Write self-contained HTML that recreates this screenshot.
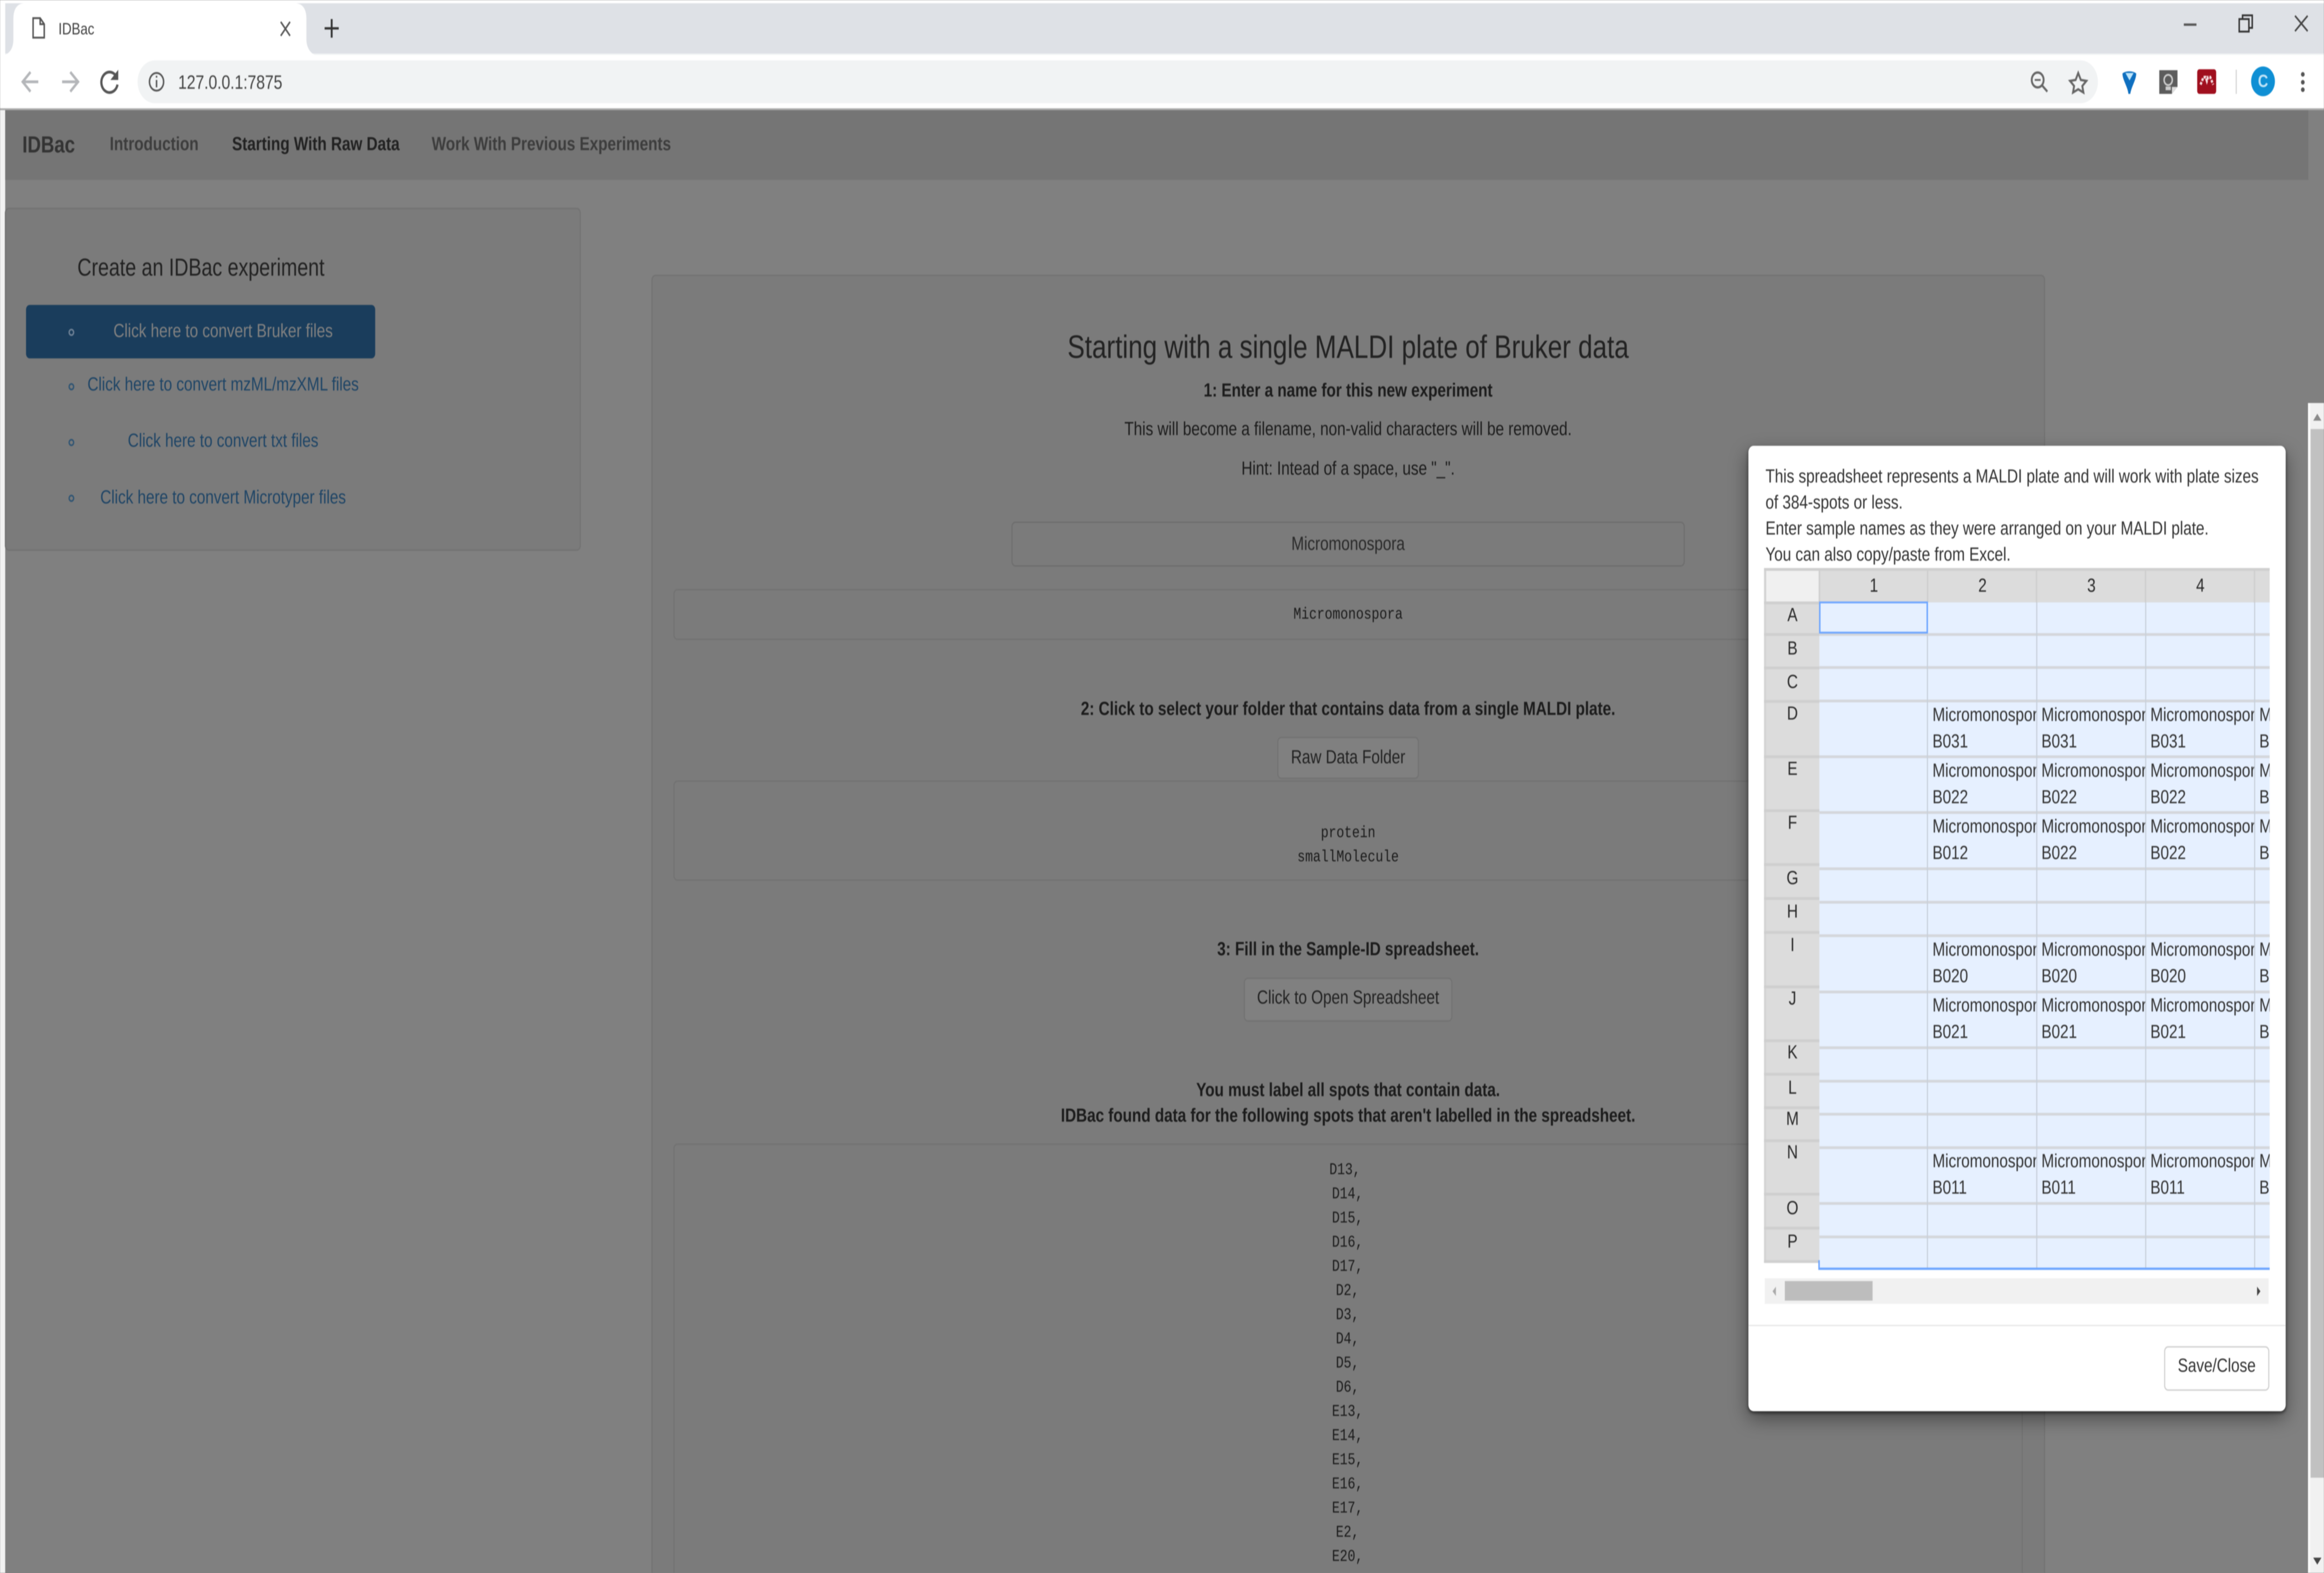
<!DOCTYPE html>
<html><head><meta charset="utf-8"><title>IDBac</title>
<style>
html,body{margin:0;padding:0;width:100%;height:100%;overflow:hidden;background:#808080}
#p{position:absolute;left:0;top:0;width:6250px;height:3384px;overflow:hidden;font-family:"Liberation Sans",sans-serif;font-size:41px;color:#1c1c1c;transform-origin:0 0;filter:blur(1px)}
#p div{position:absolute}
.t{white-space:pre;line-height:56px;height:56px}
.cx{left:1811px;width:3629px;text-align:center}
.l{left:1799px}
.b{font-weight:bold}
.m{font-family:"Liberation Mono",monospace;font-size:35px;line-height:52px;height:52px;color:#1c1c1c}
.n{font-weight:bold;font-size:41px;color:#3d3d3d;line-height:56px;height:56px;top:281px;white-space:pre}
.s{left:70px;width:1060px;text-align:center;color:#1f4566;font-size:41px}
.bx{background:#7b7b7b;border:3px solid #727272;border-radius:11px;box-sizing:border-box}
.h{left:4750px;width:141px;text-align:center;color:#2a2a2a;line-height:56px;height:56px;margin-top:-1px}
.hd{width:293px;text-align:center;top:1231px;color:#2a2a2a;line-height:56px;height:56px}
.hl{left:4893px;width:1211px;height:6px;background:#d4d7dc}
.vl{top:1296px;height:1434px;width:3px;background:#c8d0da}
.vh{top:1228px;height:68px;width:4px;background:#cfcfcf}
.rl{left:4744px;width:149px;height:6px;background:#cfcfcf}
.c{width:279px;height:114px;overflow:hidden;white-space:nowrap;line-height:57px;color:#333;font-size:41px}
.e{width:28px}
</style></head><body><div id="p">

<!-- browser chrome -->
<div style="left:0;top:0;width:6250px;height:237px;background:#fff"></div>
<div style="left:14px;top:7px;width:6236px;height:108px;background:#dee1e6"></div>
<div style="left:14px;top:115px;width:6236px;height:3px;background:#f1f3f4"></div>
<div style="left:370px;top:130px;width:5272px;height:92px;background:#f1f3f4;border-radius:46px"></div>
<div style="left:0;top:233px;width:6250px;height:4px;background:#aaa"></div>
<svg style="position:absolute;left:0;top:0" width="6250" height="237" viewBox="0 0 6250 237" fill="none">
 <path d="M14 118C30 112 36 100 36 84V40C36 20 46 7 66 7H794C814 7 824 20 824 40V84C824 100 832 112 846 118Z" fill="#fff"/>
 <path d="M89 39H108L119 52V81H89Z M108 39V52H119" stroke="#555" stroke-width="4"/>
 <path d="M755 47L780 77M780 47L755 77" stroke="#555" stroke-width="4"/>
 <path d="M892 41V81M873 61H911" stroke="#333" stroke-width="5"/>
 <path d="M103 176H63M82 155L61 176L82 197" stroke="#b4b6b9" stroke-width="6"/>
 <path d="M167 176H208M189 155L210 176L189 197" stroke="#b4b6b9" stroke-width="6"/>
 <path d="M313 165A22 22 0 1 0 316 182" stroke="#555" stroke-width="6"/><path d="M318 150V172H297Z" fill="#555"/>
 <circle cx="421" cy="176" r="19" stroke="#555" stroke-width="4"/><path d="M421 172V188M421 163V167" stroke="#555" stroke-width="4"/>
 <circle cx="5480" cy="172" r="16" stroke="#666" stroke-width="5"/><path d="M5472 172H5488" stroke="#666" stroke-width="4"/><path d="M5492 184L5506 197" stroke="#666" stroke-width="5"/>
 <path d="M5589 157L5596 172L5611 174L5600 185L5603 199L5589 192L5575 199L5578 185L5567 174L5582 172Z" stroke="#666" stroke-width="5"/>
 <path d="M5708 158C5716 152 5736 152 5745 158C5745 172 5732 186 5729 202H5724C5722 186 5708 172 5708 158Z" fill="#0e6fc0"/><path d="M5716 157H5738L5727 173Z" fill="#bfe6fb"/>
 <path d="M5807 151H5856V187L5841 202H5807Z" fill="#5c5c5c"/><path d="M5841 202V187H5856Z" fill="#ddd"/>
 <circle cx="5831" cy="172" r="11" stroke="#ccc" stroke-width="4"/><path d="M5824 186H5838V194H5824Z" fill="#ccc"/>
 <rect x="5909" y="149" width="51" height="53" rx="6" fill="#a00f1e"/>
 <path d="M5918 182L5926 166H5932L5935 174L5938 166H5944L5952 182" stroke="#f4dcdf" stroke-width="6" stroke-dasharray="6 3"/>
 <path d="M6014 150V202" stroke="#d4d4d4" stroke-width="3"/>
 <circle cx="6086" cy="175" r="32" fill="#0f8fd4"/>
 <path d="M5873 53H5907" stroke="#555" stroke-width="5"/>
 <path d="M6022 41H6048V68H6022Z" stroke="#333" stroke-width="4" fill="#dee1e6"/><path d="M6031 41V33H6057V60H6048" stroke="#333" stroke-width="4"/>
 <path d="M6172 34L6206 67M6206 34L6172 67" stroke="#444" stroke-width="4"/>
 <circle cx="6193" cy="160" r="5" fill="#555"/><circle cx="6193" cy="177" r="5" fill="#555"/><circle cx="6193" cy="193" r="5" fill="#555"/>
</svg>
<div class="t" style="left:157px;top:34px;font-size:35.5px;color:#444">IDBac</div>
<div class="t" style="left:479px;top:149px;font-size:42px;color:#444">127.0.0.1:7875</div>
<div class="t" style="left:6066px;top:147px;width:40px;text-align:center;font-size:38px;color:#bfe3f7;font-weight:bold">C</div>

<!-- page under overlay -->
<div style="left:0;top:237px;width:14px;height:3147px;background:#f2f2f2"></div>
<div style="left:14px;top:237px;width:6194px;height:150px;background:#757575"></div>
<div class="n" style="left:60px;font-size:50px;top:283px;color:#333">IDBac</div>
<div class="n" style="left:295px">Introduction</div>
<div class="n" style="left:624px;color:#222">Starting With Raw Data</div>
<div class="n" style="left:1161px">Work With Previous Experiments</div>

<!-- sidebar -->
<div class="bx" style="left:13px;top:447px;width:1549px;height:738px"></div>
<div class="t" style="left:208px;top:544px;font-size:52.7px;line-height:64px;height:64px;color:#222">Create an IDBac experiment</div>
<div style="left:70px;top:656px;width:939px;height:115px;background:#1a3d5c;border-radius:10px"></div>
<div class="t s" style="top:683px;color:#808080">Click here to convert Bruker files</div>
<div class="t s" style="top:798px">Click here to convert mzML/mzXML files</div>
<div class="t s" style="top:919px">Click here to convert txt files</div>
<div class="t s" style="top:1041px">Click here to convert Microtyper files</div>
<svg style="position:absolute;left:0;top:0" width="300" height="1100" fill="none">
 <circle cx="192" cy="715" r="6" stroke="#6f8296" stroke-width="3.5"/>
 <circle cx="192" cy="832" r="6" stroke="#2f5473" stroke-width="3.5"/>
 <circle cx="192" cy="952" r="6" stroke="#2f5473" stroke-width="3.5"/>
 <circle cx="192" cy="1072" r="6" stroke="#2f5473" stroke-width="3.5"/>
</svg>

<!-- main panel -->
<div class="bx" style="left:1752px;top:591px;width:3748px;height:2900px"></div>
<div class="t cx" style="top:706px;font-size:70px;line-height:80px;height:80px;color:#222">Starting with a single MALDI plate of Bruker data</div>
<div class="t cx b" style="top:811px">1: Enter a name for this new experiment</div>
<div class="t cx" style="top:894px">This will become a filename, non-valid characters will be removed.</div>
<div class="t cx" style="top:979px">Hint: Intead of a space, use "_".</div>
<div class="bx" style="left:2720px;top:1122px;width:1811px;height:97px;border-color:#6e6e6e"></div>
<div class="t cx" style="top:1141px;color:#2a2a2a">Micromonospora</div>
<div class="bx" style="left:1811px;top:1267px;width:3629px;height:110px"></div>
<div class="t cx m" style="top:1296px">Micromonospora</div>
<div class="t cx b" style="top:1496px">2: Click to select your folder that contains data from a single MALDI plate.</div>
<div class="bx" style="left:3435px;top:1585px;width:381px;height:91px;background:#808080"></div>
<div class="t cx" style="top:1600px;color:#222">Raw Data Folder</div>
<div class="bx" style="left:1811px;top:1679px;width:3629px;height:216px"></div>
<div class="t cx m" style="top:1766px">protein</div>
<div class="t cx m" style="top:1818px">smallMolecule</div>
<div class="t cx b" style="top:2013px">3: Fill in the Sample-ID spreadsheet.</div>
<div class="bx" style="left:3345px;top:2103px;width:561px;height:95px;background:#808080"></div>
<div class="t cx" style="top:2117px;color:#222">Click to Open Spreadsheet</div>
<div class="t cx b" style="top:2316px">You must label all spots that contain data.</div>
<div class="t cx b" style="top:2371px">IDBac found data for the following spots that aren't labelled in the spreadsheet.</div>
<div class="bx" style="left:1811px;top:2460px;width:3629px;height:1000px"></div>
<div class="t m" style="left:3479px;width:276px;text-align:center;top:2491px">D13,</div>
<div class="t cx m l" style="top:2543px"> D14,</div>
<div class="t cx m l" style="top:2595px"> D15,</div>
<div class="t cx m l" style="top:2647px"> D16,</div>
<div class="t cx m l" style="top:2699px"> D17,</div>
<div class="t cx m l" style="top:2751px"> D2,</div>
<div class="t cx m l" style="top:2803px"> D3,</div>
<div class="t cx m l" style="top:2855px"> D4,</div>
<div class="t cx m l" style="top:2907px"> D5,</div>
<div class="t cx m l" style="top:2959px"> D6,</div>
<div class="t cx m l" style="top:3011px"> E13,</div>
<div class="t cx m l" style="top:3063px"> E14,</div>
<div class="t cx m l" style="top:3115px"> E15,</div>
<div class="t cx m l" style="top:3167px"> E16,</div>
<div class="t cx m l" style="top:3219px"> E17,</div>
<div class="t cx m l" style="top:3271px"> E2,</div>
<div class="t cx m l" style="top:3323px"> E20,</div>

<!-- page-level scrollbar -->
<div style="left:6207px;top:867px;width:43px;height:2517px;background:#f1f1f1"></div>
<div style="left:6207px;top:867px;width:6px;height:2517px;background:#fafafa"></div>
<div style="left:6214px;top:923px;width:36px;height:2256px;background:#c1c1c1"></div>
<svg style="position:absolute;left:6213px;top:880px" width="37" height="40"><path d="M8 25H30L19 10Z" fill="#8a8a8a"/></svg>
<svg style="position:absolute;left:6213px;top:3345px" width="37" height="30"><path d="M8 6H30L19 21Z" fill="#444"/></svg>

<!-- modal -->
<div style="left:4702px;top:959px;width:1445px;height:2077px;background:#fff;border-radius:14px;box-shadow:0 4px 8px rgba(0,0,0,.55),0 16px 46px rgba(0,0,0,.42)"></div>
<div class="t" style="left:4748px;top:996px;color:#333">This spreadsheet represents a MALDI plate and will work with plate sizes</div>
<div class="t" style="left:4748px;top:1052px;color:#333">of 384-spots or less.</div>
<div class="t" style="left:4748px;top:1108px;color:#333">Enter sample names as they were arranged on your MALDI plate.</div>
<div class="t" style="left:4748px;top:1164px;color:#333">You can also copy/paste from Excel.</div>

<div style="left:0;top:0;width:6104px;height:3384px;overflow:hidden">
 <!-- header row -->
 <div style="left:4744px;top:1222px;width:1360px;height:6px;background:#cfcfcf"></div>
 <div style="left:4744px;top:1228px;width:6px;height:1489px;background:#d4d4d4"></div>
 <div style="left:4750px;top:1228px;width:141px;height:66px;background:#f0f0f0"></div>
 <div style="left:4891px;top:1228px;width:1213px;height:68px;background:#dcdcdc"></div>
 <div class="vh" style="left:4891px"></div><div class="vh" style="left:5182px"></div><div class="vh" style="left:5475px"></div><div class="vh" style="left:5768px"></div><div class="vh" style="left:6061px"></div>
 <div class="hd" style="left:4893px">1</div><div class="hd" style="left:5185px">2</div><div class="hd" style="left:5478px">3</div><div class="hd" style="left:5771px">4</div>
 <!-- row headers -->
 <div style="left:4750px;top:1294px;width:143px;height:1417px;background:#dcdcdc"></div>
 <div class="rl" style="top:1294px"></div><div class="rl" style="top:1362px"></div><div class="rl" style="top:1434px"></div><div class="rl" style="top:1506px"></div><div class="rl" style="top:1625px"></div><div class="rl" style="top:1741px"></div><div class="rl" style="top:1857px"></div><div class="rl" style="top:1930px"></div><div class="rl" style="top:2003px"></div><div class="rl" style="top:2120px"></div><div class="rl" style="top:2236px"></div><div class="rl" style="top:2308px"></div><div class="rl" style="top:2380px"></div><div class="rl" style="top:2451px"></div><div class="rl" style="top:2566px"></div><div class="rl" style="top:2639px"></div><div class="rl" style="top:2711px"></div>
 <div class="h" style="top:1295px">A</div><div class="h" style="top:1367px">B</div><div class="h" style="top:1439px">C</div><div class="h" style="top:1507px">D</div><div class="h" style="top:1626px">E</div><div class="h" style="top:1742px">F</div><div class="h" style="top:1861px">G</div><div class="h" style="top:1933px">H</div><div class="h" style="top:2005px">I</div><div class="h" style="top:2120px">J</div><div class="h" style="top:2236px">K</div><div class="h" style="top:2312px">L</div><div class="h" style="top:2379px">M</div><div class="h" style="top:2451px">N</div><div class="h" style="top:2571px">O</div><div class="h" style="top:2643px">P</div>
 <!-- grid -->
 <div style="left:4893px;top:1296px;width:1211px;height:1434px;background:#e6f0ff"></div>
 <div class="hl" style="top:1362px"></div><div class="hl" style="top:1433px"></div><div class="hl" style="top:1505px"></div><div class="hl" style="top:1625px"></div><div class="hl" style="top:1745px"></div><div class="hl" style="top:1866px"></div><div class="hl" style="top:1938px"></div><div class="hl" style="top:2010px"></div><div class="hl" style="top:2131px"></div><div class="hl" style="top:2251px"></div><div class="hl" style="top:2323px"></div><div class="hl" style="top:2394px"></div><div class="hl" style="top:2466px"></div><div class="hl" style="top:2586px"></div><div class="hl" style="top:2658px"></div>
 <div class="vl" style="left:5182px"></div><div class="vl" style="left:5476px"></div><div class="vl" style="left:5769px"></div><div class="vl" style="left:6062px"></div>
 <!-- selection -->
 <div style="left:4892px;top:1294px;width:293px;height:69px;border:4px solid #6ea6ff;box-sizing:border-box"></div>
 <div style="left:4890px;top:2727px;width:1214px;height:5px;background:#6ea6ff"></div>
 <div style="left:4890px;top:2711px;width:4px;height:20px;background:#6ea6ff"></div>
 <!-- cells -->
 <div class="c" style="left:5197px;top:1509px">Micromonospora<br>B031</div><div class="c" style="left:5490px;top:1509px">Micromonospora<br>B031</div><div class="c" style="left:5783px;top:1509px">Micromonospora<br>B031</div><div class="c e" style="left:6076px;top:1509px">M<br>B</div>
 <div class="c" style="left:5197px;top:1629px">Micromonospora<br>B022</div><div class="c" style="left:5490px;top:1629px">Micromonospora<br>B022</div><div class="c" style="left:5783px;top:1629px">Micromonospora<br>B022</div><div class="c e" style="left:6076px;top:1629px">M<br>B</div>
 <div class="c" style="left:5197px;top:1749px">Micromonospora<br>B012</div><div class="c" style="left:5490px;top:1749px">Micromonospora<br>B022</div><div class="c" style="left:5783px;top:1749px">Micromonospora<br>B022</div><div class="c e" style="left:6076px;top:1749px">M<br>B</div>
 <div class="c" style="left:5197px;top:2014px">Micromonospora<br>B020</div><div class="c" style="left:5490px;top:2014px">Micromonospora<br>B020</div><div class="c" style="left:5783px;top:2014px">Micromonospora<br>B020</div><div class="c e" style="left:6076px;top:2014px">M<br>B</div>
 <div class="c" style="left:5197px;top:2134px">Micromonospora<br>B021</div><div class="c" style="left:5490px;top:2134px">Micromonospora<br>B021</div><div class="c" style="left:5783px;top:2134px">Micromonospora<br>B021</div><div class="c e" style="left:6076px;top:2134px">M<br>B</div>
 <div class="c" style="left:5197px;top:2469px">Micromonospora<br>B011</div><div class="c" style="left:5490px;top:2469px">Micromonospora<br>B011</div><div class="c" style="left:5783px;top:2469px">Micromonospora<br>B011</div><div class="c e" style="left:6076px;top:2469px">M<br>B</div>
</div>

<!-- horizontal scrollbar -->
<div style="left:4746px;top:2750px;width:1355px;height:55px;background:#f1f1f1"></div>
<div style="left:4800px;top:2756px;width:236px;height:42px;background:#bdbdbd"></div>
<svg style="position:absolute;left:4760px;top:2765px" width="24" height="26"><path d="M16 3V23L7 13Z" fill="#aaa"/></svg>
<svg style="position:absolute;left:6062px;top:2765px" width="24" height="26"><path d="M8 3V23L17 13Z" fill="#444"/></svg>

<!-- footer -->
<div style="left:4702px;top:2850px;width:1445px;height:3px;background:#e8e8e8"></div>
<div style="left:5820px;top:2896px;width:283px;height:96px;background:#fff;border:3px solid #d0d0d0;border-radius:11px;box-sizing:border-box"></div>
<div class="t" style="left:5820px;width:283px;text-align:center;top:2909px;color:#333">Save/Close</div>

</div>
<script>
(function(){var p=document.getElementById('p');var sx=window.innerWidth/6250,sy=window.innerHeight/3384;if(sx!==1||sy!==1){p.style.transform='scale('+sx+','+sy+')';}})();
</script>
</body></html>
